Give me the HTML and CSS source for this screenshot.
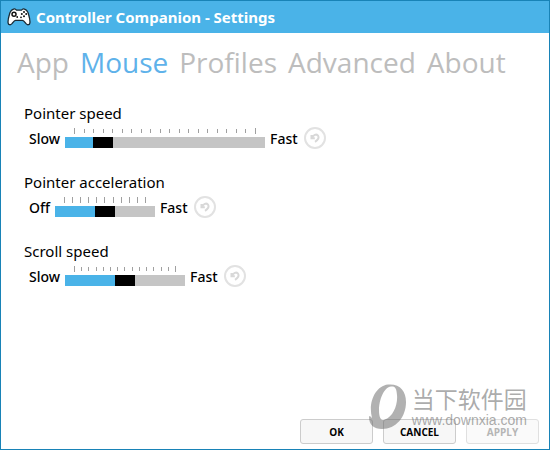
FILE: index.html
```html
<!DOCTYPE html>
<html lang="en">
<head>
    <meta charset="UTF-8" />
    <meta name="viewport" content="width=device-width, initial-scale=1.0"/>
    <title>Controller Companion - Settings</title>
    <link rel="stylesheet" href="styles.css">
</head>
<body>
    <header class="title-bar">
        <svg class="title-icon" viewBox="0 0 24 18" aria-hidden="true">
            <path d="M6.500 1.200 C7.500 .7 8.800 1.300 9.500 2.200 H14.500 C15.200 1.300 16.500 .7 17.500 1.200 C20 2 21 4 21.600 6.500 C22.500 9.500 23.200 12.500 22.900 14.800 C22.600 17 20.600 17.300 19.300 15.900 C17.800 14.200 17 12.500 15.500 12.300 H8.500 C7 12.500 6.200 14.200 4.700 15.900 C3.400 17.300 1.400 17 1.100 14.800 C.8 12.500 1.500 9.500 2.400 6.500 C3 4 4 2 6.500 1.200 Z" fill="#fff" stroke="#1b2a33" stroke-width="1.300"/>
            <circle cx="7" cy="6.300" r="2" fill="#fff" stroke="#111" stroke-width="1.500"/>
            <circle cx="17" cy="3.900" r="1" fill="#111"/>
            <circle cx="17" cy="8.300" r="1" fill="#111"/>
            <circle cx="14.800" cy="6.100" r="1" fill="#111"/>
            <circle cx="19.200" cy="6.100" r="1" fill="#111"/>
            <circle cx="10.200" cy="9" r=".9" fill="#111"/>
            <circle cx="14" cy="9.300" r=".9" fill="#111"/>
        </svg>
        <h1>Controller Companion - Settings</h1>
    </header>

    <nav class="tabs">
        <a href="#app">App</a>
        <a href="#mouse" class="active">Mouse</a>
        <a href="#profiles">Profiles</a>
        <a href="#advanced">Advanced</a>
        <a href="#about">About</a>
    </nav>

    <main class="settings">
        <section class="setting">
            <label for="pointer-speed">Pointer speed</label>
            <div class="setting-row">
                <span>Slow</span>
                <div class="slider slider-long">
                    <div class="ticks"><i></i><i></i><i></i><i></i><i></i><i></i><i></i><i></i><i></i><i></i><i></i><i></i><i></i><i></i><i></i><i></i><i></i><i></i><i></i><i></i></div>
                    <input type="range" id="pointer-speed" min="1" max="20" value="4" style="--fill: 16%">
                </div>
                <span>Fast</span>
                <button type="button" class="reset-btn" aria-label="Reset pointer speed">
                    <svg viewBox="0 0 10 10"><path d="M1.500 2 V5.200 H4.800 M1.800 4.800 C3.500 1.800 6.200 .8 7.800 2.400 C9.500 4.500 8 7 5 8.800"/></svg>
                </button>
            </div>
        </section>

        <section class="setting">
            <label for="pointer-acceleration">Pointer acceleration</label>
            <div class="setting-row">
                <span>Off</span>
                <div class="slider slider-short">
                    <div class="ticks"><i></i><i></i><i></i><i></i><i></i><i></i><i></i><i></i><i></i><i></i><i></i></div>
                    <input type="range" id="pointer-acceleration" min="0" max="10" value="5" style="--fill: 50%">
                </div>
                <span>Fast</span>
                <button type="button" class="reset-btn" aria-label="Reset pointer acceleration">
                    <svg viewBox="0 0 10 10"><path d="M1.500 2 V5.200 H4.800 M1.800 4.800 C3.500 1.800 6.200 .8 7.800 2.400 C9.500 4.500 8 7 5 8.800"/></svg>
                </button>
            </div>
        </section>

        <section class="setting">
            <label for="scroll-speed">Scroll speed</label>
            <div class="setting-row">
                <span>Slow</span>
                <div class="slider slider-medium">
                    <div class="ticks"><i></i><i></i><i></i><i></i><i></i><i></i><i></i><i></i><i></i><i></i><i></i><i></i><i></i><i></i><i></i></div>
                    <input type="range" id="scroll-speed" min="1" max="15" value="8" style="--fill: 50%">
                </div>
                <span>Fast</span>
                <button type="button" class="reset-btn" aria-label="Reset scroll speed">
                    <svg viewBox="0 0 10 10"><path d="M1.500 2 V5.200 H4.800 M1.800 4.800 C3.500 1.800 6.200 .8 7.800 2.400 C9.500 4.500 8 7 5 8.800"/></svg>
                </button>
            </div>
        </section>
    </main>

    <footer class="actions">
        <button type="button">OK</button>
        <button type="button">CANCEL</button>
        <button type="button" disabled>APPLY</button>
    </footer>

    <div class="watermark">
        <svg viewBox="0 0 38 46" aria-hidden="true">
            <path fill-rule="evenodd" d="M19 .5 C31 -.5 37 7 37 18 C37 33 27 45 13 45 C5 45 0 41 0 33 C.5 31 1 32 3 34 C-1 19 6 2 19 .5 Z M22 2.500 C15 3 10 16 10 26 C10 34 12 37 16 35.500 C24 33 29 21 28 11 C27.500 4 26 2 22 2.500 Z"/>
        </svg>
        <div>
            <div class="watermark-name" lang="zh">当下软件园</div>
            <div class="watermark-url">www.downxia.com</div>
        </div>
    </div>
</body>
</html>
```
FILE: styles.css
```css
:root {
    --primary-color: #4ab3e8;
    --border-color: #1883b7;
    --track-color: #c5c5c5;
    --muted-color: #bdbdbd;
}
* { box-sizing: border-box; }
body {
    font-family: "Noto Sans", "Open Sans", sans-serif;
    font-size: 15px;
    color: #000;
    background-color: #fff;
    border: 1px solid var(--border-color);
    margin: 0;
    min-height: 100vh;
    display: flex;
    flex-direction: column;
    position: relative;
}
.title-bar {
    display: flex;
    align-items: center;
    gap: 5px;
    height: 32px;
    padding: 0 6px;
    background-color: var(--primary-color);
}
.title-icon { width: 24px; height: 18px; }
h1 {
    margin: 0;
    color: #fff;
    font-family: "Noto Sans", sans-serif;
    font-size: 15px;
    font-weight: 700;
}
.tabs {
    display: flex;
    gap: 11px;
    padding: 9px 16px;
}
.tabs a {
    color: var(--muted-color);
    font-family: "Open Sans", sans-serif;
    font-size: 28px;
    line-height: 40px;
    text-decoration: none;
}
.tabs a.active { color: #5fb2ea; }
.settings {
    flex: 1;
    display: flex;
    flex-direction: column;
    gap: 20px;
    padding: 10px 23px;
}
.setting label {
    display: block;
    line-height: 24px;
}
.setting-row {
    display: flex;
    align-items: center;
    gap: 5px;
    height: 25px;
    padding-left: 5px;
    font-size: 14px;
    font-weight: 500;
}
.setting-row span { padding-top: 2px; }
.slider-long { width: 200px; }
.slider-medium { width: 120px; }
.slider-short { width: 100px; }
.ticks {
    display: flex;
    justify-content: space-between;
    align-items: center;
    height: 6px;
    margin-bottom: 3px;
    padding: 0 9px;
}
.ticks i { width: 1px; height: 4px; background-color: #a0a0a0; }
.ticks i:first-child, .ticks i:last-child { height: 6px; }
.slider-short .ticks i { height: 6px; }
.slider input {
    appearance: none;
    display: block;
    width: 100%;
    height: 11px;
    margin: 0;
    background: linear-gradient(to right, var(--primary-color) var(--fill), var(--track-color) var(--fill));
}
.slider input::-webkit-slider-thumb {
    appearance: none;
    width: 20px;
    height: 11px;
    background-color: #000;
}
.reset-btn {
    display: flex;
    align-items: center;
    justify-content: center;
    width: 22px;
    height: 22px;
    margin-left: 1px;
    padding: 0;
    border: 2px solid #e2e2e2;
    border-radius: 50%;
    background: #fff;
}
.reset-btn svg {
    width: 10px;
    height: 10px;
    fill: none;
    stroke: #d8d8d8;
    stroke-width: 2;
}
.actions {
    display: flex;
    justify-content: flex-end;
    gap: 10px;
    padding: 5px 10px;
}
.actions button {
    width: 73px;
    height: 25px;
    padding: 0;
    border: 1px solid #ccc;
    border-radius: 3px;
    background-color: #f7f7f7;
    color: #000;
    font-family: "Open Sans", sans-serif;
    font-size: 10px;
    font-weight: 700;
}
.actions button:disabled { border-color: #e0e0e0; background-color: #fafafa; color: #b5b5b5; }
.watermark {
    position: absolute;
    right: 22px;
    bottom: 19px;
    display: flex;
    gap: 5px;
    color: rgba(100, 100, 100, 0.55);
    pointer-events: none;
}
.watermark svg { width: 38px; height: 46px; fill: rgba(100, 100, 100, 0.5); }
.watermark-name {
    font-family: "Noto Sans CJK SC", sans-serif;
    font-size: 23px;
    line-height: 28px;
}
.watermark-url {
    font-family: "Liberation Sans", sans-serif;
    font-size: 14px;
    line-height: 16px;
}
```
